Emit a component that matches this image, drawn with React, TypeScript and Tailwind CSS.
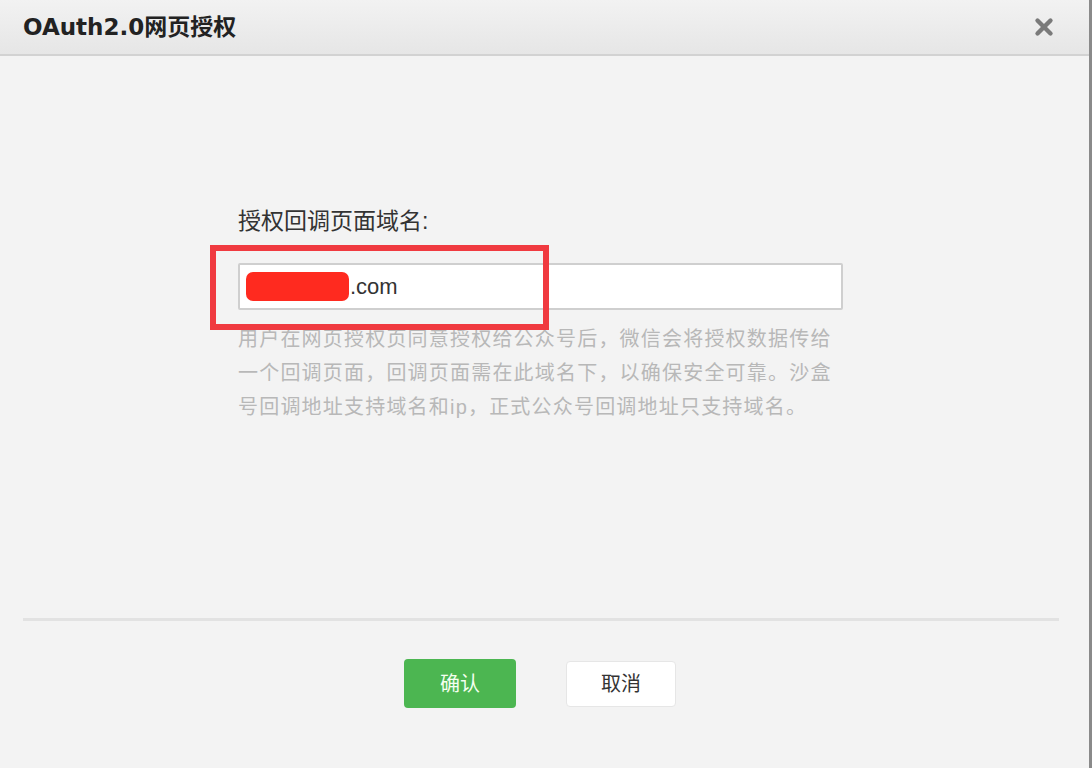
import { X } from "lucide-react"

const cjk = { fontFamily: '"Liberation Sans", "Noto Sans CJK SC", sans-serif' }

export default function App() {
  return (
    <div
      className="relative w-[1092px] h-[768px] bg-[#f3f3f3] border-r-[3px] border-[#8a8a8a] flex flex-col overflow-hidden"
      style={cjk}
    >
      {/* Header */}
      <div className="h-[56px] shrink-0 flex items-center justify-between pl-[23px] pr-[32px] bg-gradient-to-b from-[#f2f2f2] to-[#e6e6e6] border-b-2 border-[#d2d2d2]">
        <span
          className="text-[23px] font-bold text-[#222]"
          style={{ fontFamily: '"DejaVu Sans", "Noto Sans CJK SC", sans-serif' }}
        >
          OAuth2.0网页授权
        </span>
        <X className="w-[26px] h-[26px] text-[#7a7a7a]" strokeWidth={4} />
      </div>

      {/* Body */}
      <div className="flex-1 flex flex-col">
        <div className="pl-[238px] pt-[150px]">
          <div className="text-[23px] leading-[30px] text-[#333]">授权回调页面域名:</div>
          <div className="mt-[27px] w-[605px] h-[47px] bg-white border-2 border-[#cfcfcf] rounded-[2px] flex items-center pl-[6px]">
            <span className="w-[103px] h-[29px] rounded-[7px] bg-[#ff2a1f]" />
            <span className="text-[22px] text-[#333] ml-[1px]">.com</span>
          </div>
          <p className="mt-[12px] text-[20px] leading-[34px] text-[#b8b8b8] tracking-[1.2px]">
            用户在网页授权页同意授权给公众号后，微信会将授权数据传给
            <br />
            一个回调页面，回调页面需在此域名下，以确保安全可靠。沙盒
            <br />
            号回调地址支持域名和ip，正式公众号回调地址只支持域名。
          </p>
        </div>

        {/* Footer */}
        <div className="mt-auto">
          <div className="ml-[23px] mr-[30px] h-[3px] bg-[#e2e2e2]" />
          <div className="flex items-center gap-[50px] pl-[404px] pt-[38px] pb-[60px]">
            <button className="w-[112px] h-[49px] rounded-[4px] bg-[#4cb651] text-[#f4fff0] text-[20px]">
              确认
            </button>
            <button className="w-[110px] h-[46px] rounded-[4px] bg-white border border-[#e6e6e6] text-[#333] text-[20px]">
              取消
            </button>
          </div>
        </div>
      </div>

      {/* Red annotation box */}
      <div className="absolute left-[210px] top-[245px] w-[339px] h-[85px] border-[6px] border-[#f03a40]" />
    </div>
  )
}
